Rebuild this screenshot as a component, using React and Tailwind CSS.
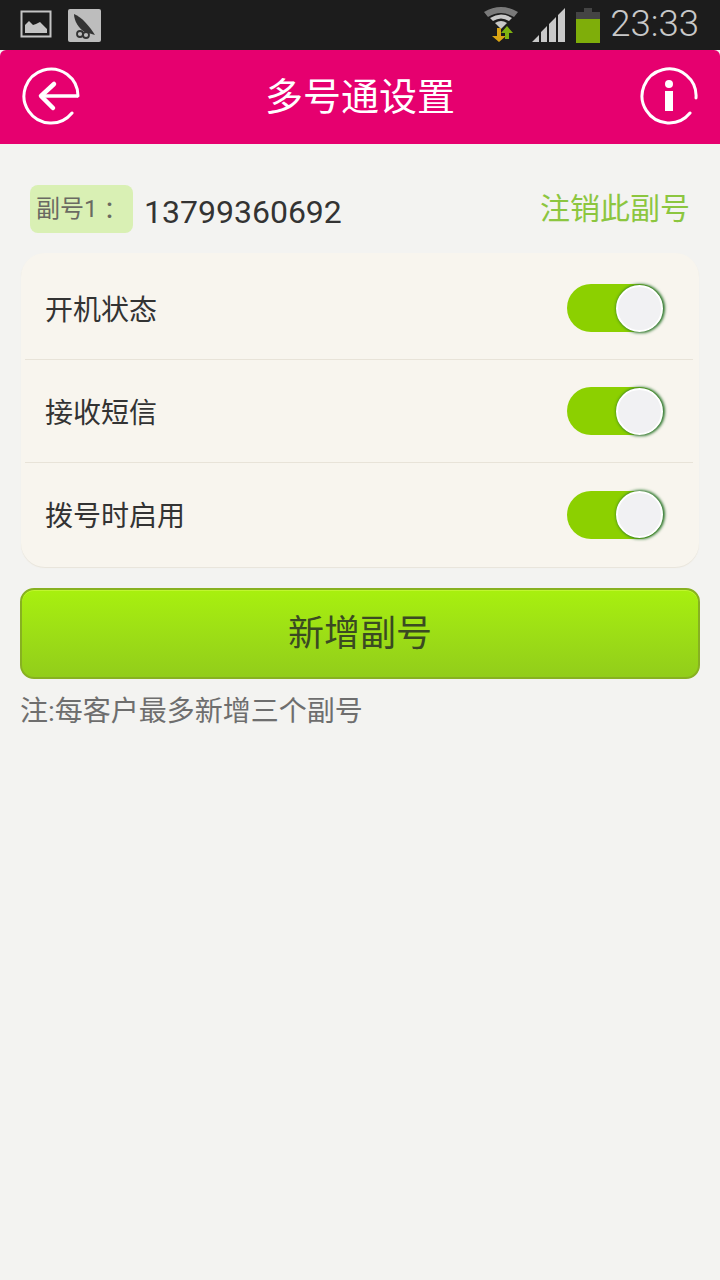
const CJK = "font-['Roboto','Noto_Sans_CJK_SC',sans-serif]";

const ROWS = [
  { label: "开机状态", height: "h-[107px] pt-1 border-b border-[#e8e3d8]" },
  { label: "接收短信", height: "h-[103px] border-b border-[#e8e3d8]" },
  { label: "拨号时启用", height: "h-[104px] pb-px" },
];

const ImageIcon = () => (
  <svg width="32" height="28" viewBox="0 0 32 28">
    <rect x="1.5" y="1.5" width="29" height="25" fill="none" stroke="#c4c4c4" strokeWidth="2" />
    <path d="M5 23 V15 L9 11 L13 15 L16 14 L20 12 L27 19 V23 Z" fill="#c4c4c4" />
  </svg>
);

const AppIcon = () => (
  <svg width="33" height="33" viewBox="0 0 33 33">
    <rect width="33" height="33" rx="2" fill="#bdbdbd" />
    <path d="M6 5 C14 8 22 18 27 26 L17 23 C11 20 6 12 6 5 Z" fill="#333" />
    <circle cx="12" cy="25" r="3" fill="none" stroke="#333" strokeWidth="1.8" />
    <circle cx="18" cy="26" r="3" fill="none" stroke="#333" strokeWidth="1.8" />
  </svg>
);

const WifiIcon = () => (
  <svg width="36" height="36" viewBox="0 0 36 36">
    <path d="M1 6 Q18 -4 35 6 L31 11 Q18 3 5 11 Z" fill="#7a7a7a" />
    <path d="M7 12 Q18 5 29 12 L26 15 Q18 10 10 15 Z" fill="#c8c8c8" />
    <path d="M12 17 Q18 13 24 17 L18 23 Z" fill="#c8c8c8" />
    <path d="M14 22 H18 V30 H23 L16 36 L9 30 H14 Z" fill="#d9a514" />
    <path d="M24 20 L30 27 H26 V33 H22 V27 H18 Z" fill="#7fb311" />
  </svg>
);

const SignalIcon = () => (
  <svg width="34" height="34" viewBox="0 0 34 34">
    <path d="M0 34 L7 27 V34 Z M9 34 V24 L15 18 V34 Z M17 34 V16 L24 9 V34 Z M26 34 V7 L33 0 V34 Z" fill="#c9c9c9" />
  </svg>
);

const BackIcon = () => (
  <svg width="60" height="60" viewBox="0 0 60 60" fill="none" stroke="#fff" strokeLinecap="round">
    <path d="M57 29 A27 27 0 1 0 51 46" strokeWidth="3" />
    <path d="M57 29 H20" strokeWidth="3.5" strokeLinecap="butt" />
    <path d="M33 17 L20 29 L32 41" strokeWidth="4.5" strokeLinejoin="round" />
  </svg>
);

const InfoIcon = () => (
  <svg width="60" height="60" viewBox="0 0 60 60" fill="none">
    <path d="M57 31 A27 27 0 1 0 51 46" stroke="#fff" strokeWidth="3" strokeLinecap="round" />
    <circle cx="30" cy="17" r="4" fill="#fff" />
    <path d="M26 24 H34 V44 H26 Z" fill="#fff" />
  </svg>
);

const Toggle = () => (
  <div className="flex h-12 w-[96px] items-center justify-end rounded-full bg-[#8cd000]">
    <div className="h-[47px] w-[47px] rounded-full border-2 border-white bg-[#f1f1f3] shadow-[1px_0_3px_1px_#2a7428]" />
  </div>
);

export default function App() {
  return (
    <div className={`flex min-h-[1280px] w-[720px] flex-col bg-[#f3f3f1] ${CJK}`}>
      {/* status bar */}
      <div className="flex h-[50px] items-center bg-[#1c1c1c] pl-5 pr-[21px]">
        <div className="mb-[2px]"><ImageIcon /></div>
        <div className="ml-[16px]"><AppIcon /></div>
        <div className="ml-auto flex items-center">
          <div className="mb-[2px]"><WifiIcon /></div>
          <div className="ml-[13px]"><SignalIcon /></div>
          <div className="ml-[10px] flex h-[35px] w-6 flex-col items-center">
            <div className="h-1 w-2 bg-[#444]" />
            <div className="h-[7px] w-6 bg-[#444]" />
            <div className="w-6 flex-1 bg-[#7fae0a]" />
          </div>
          <span className="mb-[2px] ml-[10px] font-['Roboto',sans-serif] text-[36.5px] font-light leading-none text-[#c8c8c8]">23:33</span>
        </div>
      </div>

      {/* header */}
      <div className="flex h-[94px] items-center justify-between rounded-t-[6px] bg-[#e6006f] px-[21px]">
        <BackIcon />
        <h1 className="mt-px text-[38px] font-normal text-white">多号通设置</h1>
        <InfoIcon />
      </div>

      <div className="flex flex-col px-5">
        {/* number row */}
        <div className="mt-[41px] flex h-12 items-center px-[10px]">
          <div className="flex h-12 w-[103px] items-center rounded-lg bg-[#d9f0b4] pl-[6px] text-2xl text-[#6a6a62]">
            副号1<span className="font-['Noto_Sans_CJK_TC',sans-serif]">：</span>
          </div>
          <span className="ml-[11px] mt-[6px] text-[32px] text-[#333]">13799360692</span>
          <span className="ml-auto -mt-px text-[30px] text-[#8cc63f]">注销此副号</span>
        </div>

        {/* settings card */}
        <div className="mx-px mt-5 flex h-[314px] flex-col rounded-[24px] bg-[#f8f5ee] pl-1 pr-[6px] shadow-[0_1px_1px_#e8e4da]">
          {ROWS.map((row) => (
            <div key={row.label} className={`flex items-center justify-between pl-5 pr-[30px] ${row.height}`}>
              <span className="mt-[5px] text-[28px] text-[#333]">{row.label}</span>
              <Toggle />
            </div>
          ))}
        </div>

        {/* add button */}
        <button className="mt-[21px] h-[91px] rounded-[14px] border-2 border-[#87b121] bg-gradient-to-b from-[#a8f00e] to-[#92cd1a] text-[36px] text-[#3a4a22] shadow-[inset_0_1px_0_#c0f530]">
          新增副号
        </button>

        <p className="mt-3 text-[28px] text-[#6e6e6e]">注:每客户最多新增三个副号</p>
      </div>
    </div>
  );
}
